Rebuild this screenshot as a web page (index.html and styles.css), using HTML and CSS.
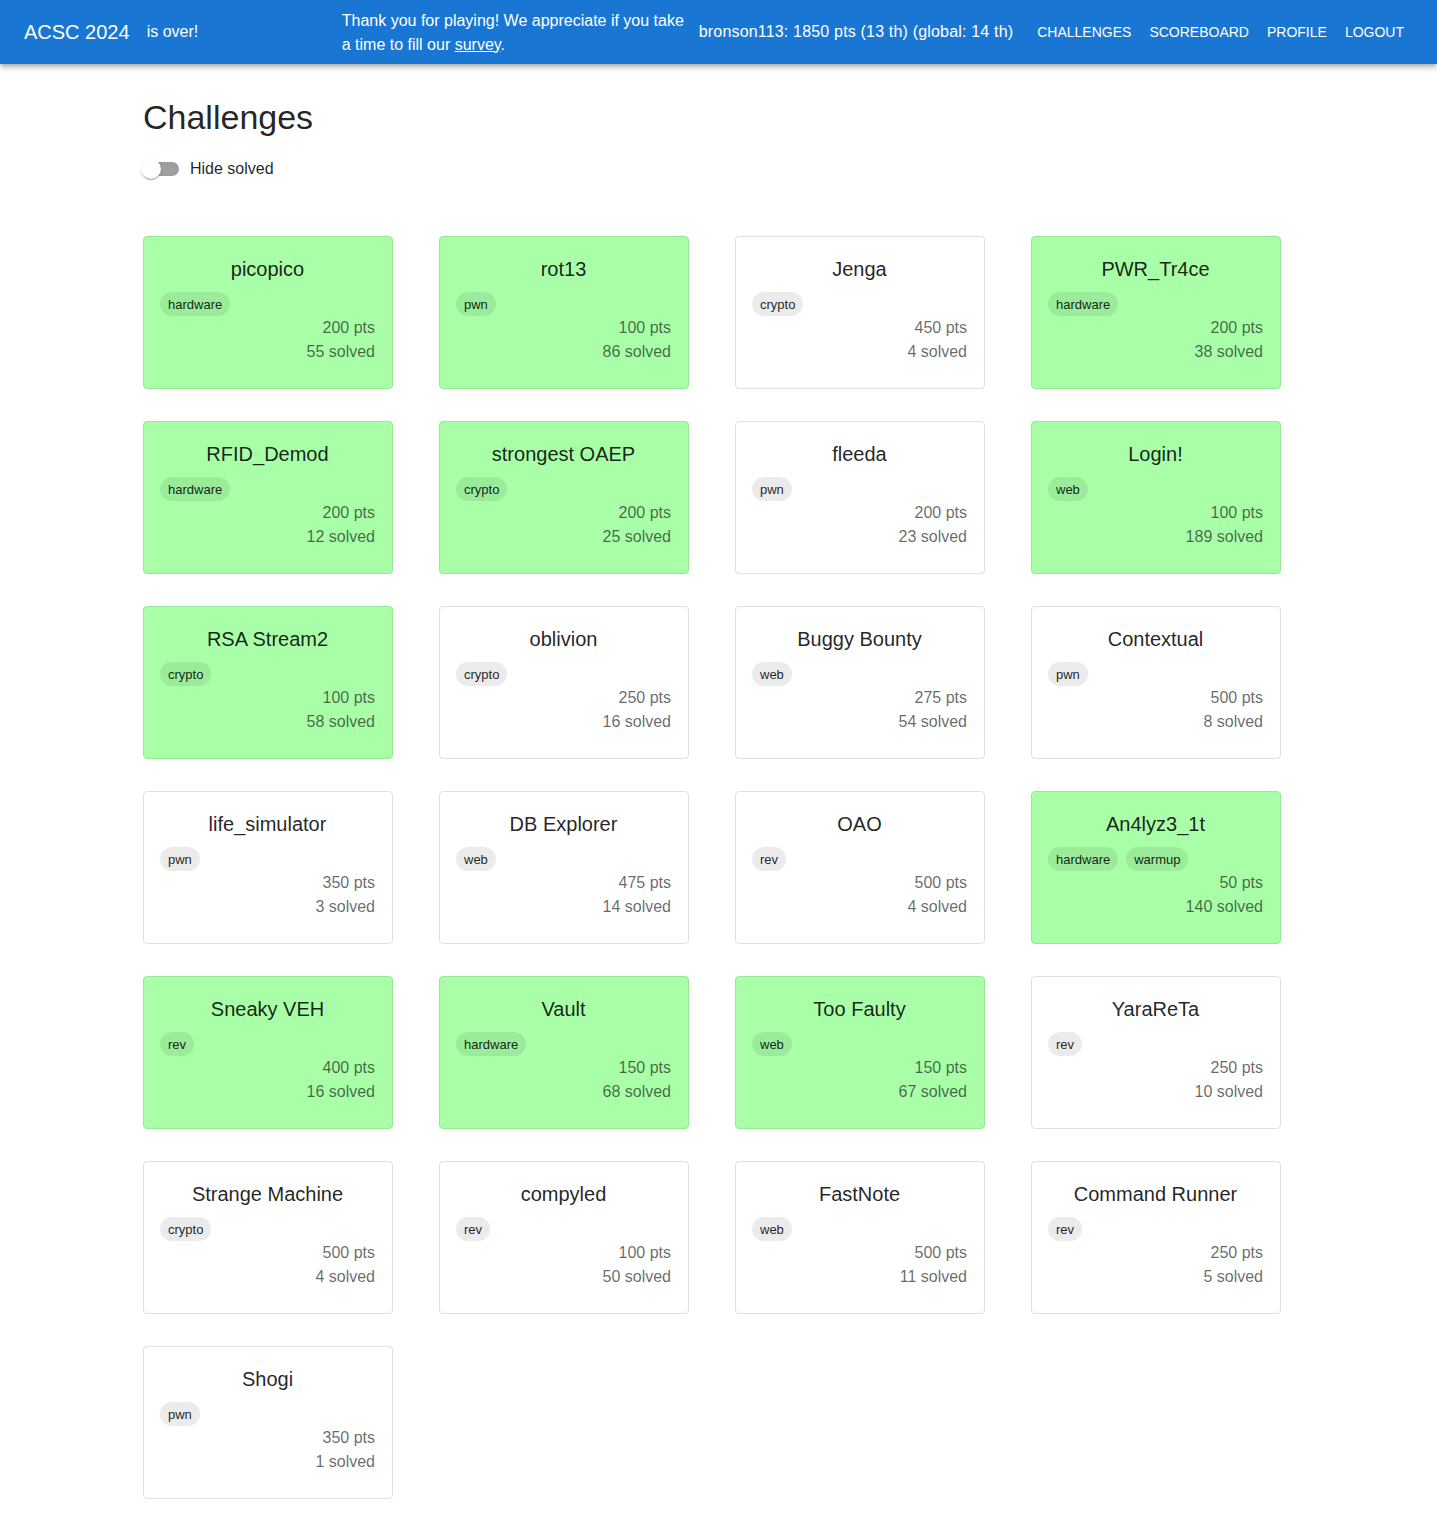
FILE: index.html
```html
<!DOCTYPE html>
<html lang="en">
<head>
<meta charset="utf-8">
<title>Challenges - ACSC 2024</title>
<link rel="stylesheet" href="styles.css">
</head>
<body>
<header class="appbar">
  <div class="brand">ACSC 2024</div>
  <div class="status">is over!</div>
  <div class="spacer"></div>
  <div class="notice"><div class="notice-line">Thank you for playing! We appreciate if you take</div><div class="notice-line"><span>a time to fill our </span><a href="#" class="survey">survey</a><span>.</span></div></div>
  <div class="user">bronson113: 1850 pts (13 th) (global: 14 th)</div>
  <nav class="nav">
    <a href="#" class="nav-btn">Challenges</a>
    <a href="#" class="nav-btn">Scoreboard</a>
    <a href="#" class="nav-btn">Profile</a>
    <a href="#" class="nav-btn">Logout</a>
  </nav>
</header>

<main class="content">
  <h1 class="page-title">Challenges</h1>
  <label class="switch-row">
    <span class="switch"><span class="track"></span><span class="knob"></span></span>
    <span class="switch-label">Hide solved</span>
  </label>

  <section class="grid">
    <div class="card solved"><div class="card-title">picopico</div><div class="chips"><span class="chip">hardware</span></div><div class="stats"><div>200 pts</div><div>55 solved</div></div></div>
    <div class="card solved"><div class="card-title">rot13</div><div class="chips"><span class="chip">pwn</span></div><div class="stats"><div>100 pts</div><div>86 solved</div></div></div>
    <div class="card"><div class="card-title">Jenga</div><div class="chips"><span class="chip">crypto</span></div><div class="stats"><div>450 pts</div><div>4 solved</div></div></div>
    <div class="card solved"><div class="card-title">PWR_Tr4ce</div><div class="chips"><span class="chip">hardware</span></div><div class="stats"><div>200 pts</div><div>38 solved</div></div></div>

    <div class="card solved"><div class="card-title">RFID_Demod</div><div class="chips"><span class="chip">hardware</span></div><div class="stats"><div>200 pts</div><div>12 solved</div></div></div>
    <div class="card solved"><div class="card-title">strongest OAEP</div><div class="chips"><span class="chip">crypto</span></div><div class="stats"><div>200 pts</div><div>25 solved</div></div></div>
    <div class="card"><div class="card-title">fleeda</div><div class="chips"><span class="chip">pwn</span></div><div class="stats"><div>200 pts</div><div>23 solved</div></div></div>
    <div class="card solved"><div class="card-title">Login!</div><div class="chips"><span class="chip">web</span></div><div class="stats"><div>100 pts</div><div>189 solved</div></div></div>

    <div class="card solved"><div class="card-title">RSA Stream2</div><div class="chips"><span class="chip">crypto</span></div><div class="stats"><div>100 pts</div><div>58 solved</div></div></div>
    <div class="card"><div class="card-title">oblivion</div><div class="chips"><span class="chip">crypto</span></div><div class="stats"><div>250 pts</div><div>16 solved</div></div></div>
    <div class="card"><div class="card-title">Buggy Bounty</div><div class="chips"><span class="chip">web</span></div><div class="stats"><div>275 pts</div><div>54 solved</div></div></div>
    <div class="card"><div class="card-title">Contextual</div><div class="chips"><span class="chip">pwn</span></div><div class="stats"><div>500 pts</div><div>8 solved</div></div></div>

    <div class="card"><div class="card-title">life_simulator</div><div class="chips"><span class="chip">pwn</span></div><div class="stats"><div>350 pts</div><div>3 solved</div></div></div>
    <div class="card"><div class="card-title">DB Explorer</div><div class="chips"><span class="chip">web</span></div><div class="stats"><div>475 pts</div><div>14 solved</div></div></div>
    <div class="card"><div class="card-title">OAO</div><div class="chips"><span class="chip">rev</span></div><div class="stats"><div>500 pts</div><div>4 solved</div></div></div>
    <div class="card solved"><div class="card-title">An4lyz3_1t</div><div class="chips"><span class="chip">hardware</span><span class="chip">warmup</span></div><div class="stats"><div>50 pts</div><div>140 solved</div></div></div>

    <div class="card solved"><div class="card-title">Sneaky VEH</div><div class="chips"><span class="chip">rev</span></div><div class="stats"><div>400 pts</div><div>16 solved</div></div></div>
    <div class="card solved"><div class="card-title">Vault</div><div class="chips"><span class="chip">hardware</span></div><div class="stats"><div>150 pts</div><div>68 solved</div></div></div>
    <div class="card solved"><div class="card-title">Too Faulty</div><div class="chips"><span class="chip">web</span></div><div class="stats"><div>150 pts</div><div>67 solved</div></div></div>
    <div class="card"><div class="card-title">YaraReTa</div><div class="chips"><span class="chip">rev</span></div><div class="stats"><div>250 pts</div><div>10 solved</div></div></div>

    <div class="card"><div class="card-title">Strange Machine</div><div class="chips"><span class="chip">crypto</span></div><div class="stats"><div>500 pts</div><div>4 solved</div></div></div>
    <div class="card"><div class="card-title">compyled</div><div class="chips"><span class="chip">rev</span></div><div class="stats"><div>100 pts</div><div>50 solved</div></div></div>
    <div class="card"><div class="card-title">FastNote</div><div class="chips"><span class="chip">web</span></div><div class="stats"><div>500 pts</div><div>11 solved</div></div></div>
    <div class="card"><div class="card-title">Command Runner</div><div class="chips"><span class="chip">rev</span></div><div class="stats"><div>250 pts</div><div>5 solved</div></div></div>

    <div class="card"><div class="card-title">Shogi</div><div class="chips"><span class="chip">pwn</span></div><div class="stats"><div>350 pts</div><div>1 solved</div></div></div>
  </section>
</main>
</body>
</html>
```

FILE: styles.css
```css
* { box-sizing: border-box; }

html, body {
  margin: 0;
  padding: 0;
  background: #ffffff;
  font-family: "Liberation Sans", Arial, sans-serif;
  color: rgba(0, 0, 0, 0.87);
}

.appbar {
  height: 64px;
  background: #1976d2;
  color: #ffffff;
  display: flex;
  align-items: center;
  padding: 0 33px 0 24px;
  box-shadow: 0 2px 4px -1px rgba(0,0,0,.2), 0 4px 5px 0 rgba(0,0,0,.14), 0 1px 10px 0 rgba(0,0,0,.12);
  position: relative;
  z-index: 2;
}

.brand {
  font-size: 20px;
  line-height: 24px;
}

.status {
  font-size: 16px;
  margin-left: 17px;
  line-height: 24px;
}

.spacer { flex: 1; }

.notice {
  width: 357px;
  font-size: 16px;
  line-height: 24px;
  padding-right: 8px;
  padding-top: 1px;
}

.notice-line {
  white-space: nowrap;
}

.survey {
  color: #ffffff;
  text-decoration: underline;
}

.user {
  font-size: 16px;
  line-height: 24px;
  letter-spacing: 0.18px;
  white-space: nowrap;
  margin-right: 24px;
}

.nav {
  display: flex;
  gap: 18px;
}

.nav-btn {
  color: #ffffff;
  text-decoration: none;
  text-transform: uppercase;
  font-size: 14px;
  letter-spacing: 0;
  line-height: 36px;
}

.content {
  padding: 32px 0 40px 143px;
}

.page-title {
  margin: 0;
  font-size: 34px;
  font-weight: 400;
  line-height: 42px;
  color: rgba(0, 0, 0, 0.87);
}

.switch-row {
  display: flex;
  align-items: center;
  margin-top: 19px;
  height: 24px;
}

.switch {
  position: relative;
  width: 36px;
  height: 24px;
  display: inline-block;
}

.track {
  position: absolute;
  left: 2px;
  top: 5px;
  width: 34px;
  height: 14px;
  border-radius: 8px;
  background: #9e9e9e;
}

.knob {
  position: absolute;
  left: -2px;
  top: 2px;
  width: 20px;
  height: 20px;
  border-radius: 50%;
  background: #ffffff;
  box-shadow: 0 2px 1px -1px rgba(0,0,0,.2), 0 1px 1px 0 rgba(0,0,0,.14), 0 1px 3px 0 rgba(0,0,0,.12);
}

.switch-label {
  margin-left: 11px;
  font-size: 16px;
  color: rgba(0, 0, 0, 0.87);
}

.grid {
  margin-top: 55px;
  display: grid;
  grid-template-columns: repeat(4, 250px);
  column-gap: 46px;
  row-gap: 32px;
}

.card {
  height: 153px;
  border: 1px solid #e0e0e0;
  border-radius: 4px;
  background: #ffffff;
  padding: 16px 17px 24px 16px;
}

.card.solved {
  background: #a8ffa8;
  border-color: #96e896;
}

.card-title {
  text-align: center;
  font-size: 20px;
  line-height: 32px;
  color: rgba(0, 0, 0, 0.87);
  white-space: nowrap;
}

.chips {
  display: flex;
  gap: 8px;
  margin-top: 7px;
  height: 24px;
}

.chip {
  display: inline-flex;
  align-items: center;
  height: 24px;
  padding: 0 8px;
  border-radius: 12px;
  font-size: 13px;
  background: rgba(0, 0, 0, 0.08);
  color: rgba(0, 0, 0, 0.87);
}

.stats {
  text-align: right;
  font-size: 16px;
  line-height: 24px;
  color: rgba(0, 0, 0, 0.6);
}
```
